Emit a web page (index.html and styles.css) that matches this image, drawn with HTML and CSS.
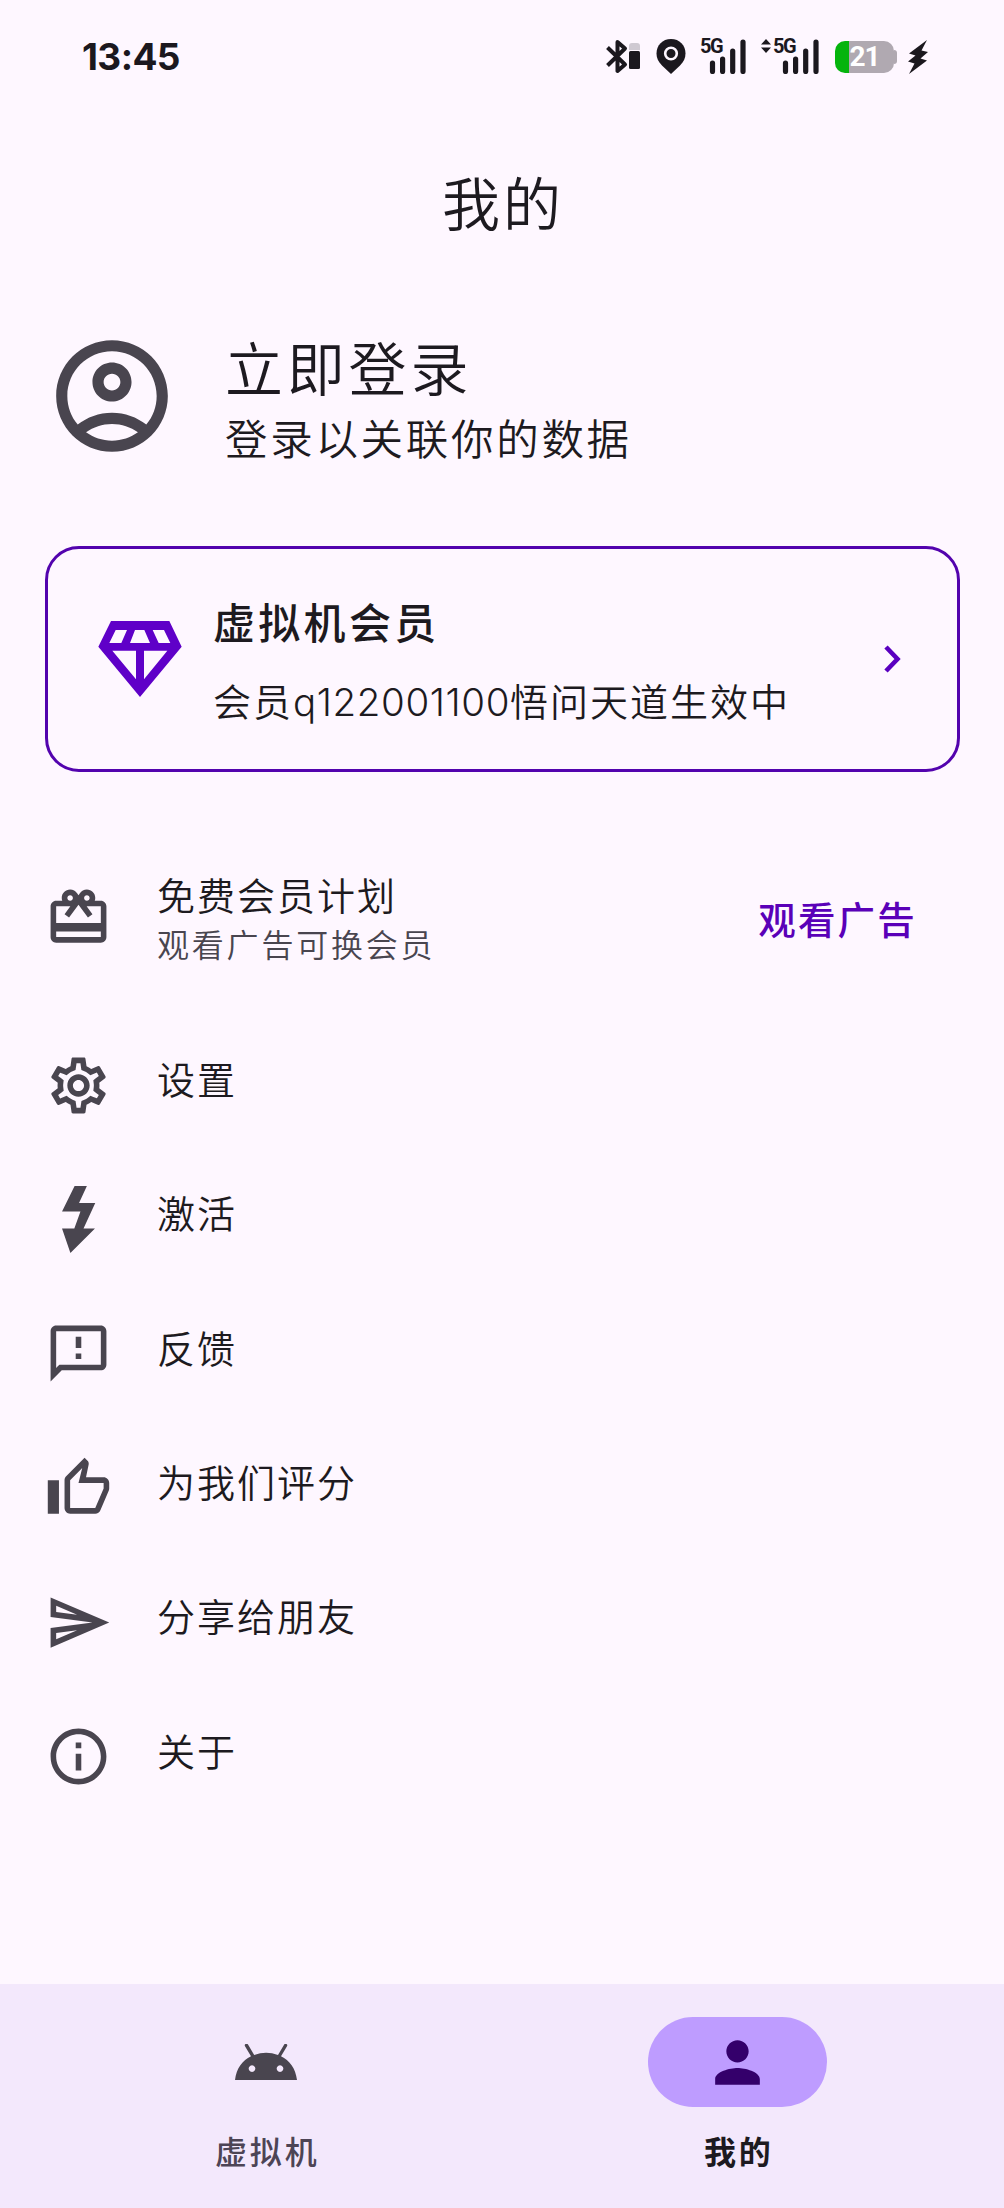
FILE: index.html
```html
<!DOCTYPE html>
<html lang="zh-CN">
<head>
<meta charset="utf-8">
<title>我的</title>
<link rel="stylesheet" href="styles.css">
</head>
<body>
<div class="screen">
  <header class="status">
    <span class="clock">13:45</span>
    <div class="tray">
      <svg class="i-bt" viewBox="0 0 36 36"><path d="M2.500 8.500 20 25.500 12.500 32V3L20 9.500 2.500 26.500" fill="none" stroke="#1b181e" stroke-width="4" stroke-linejoin="round"/><path d="M24 11V7q0-3 3-3h5q3 0 3 3v4z" fill="#cfc9d2"/><rect x="24" y="12" width="11" height="18" rx="1.500" fill="#1b181e"/></svg>
      <svg class="i-pin" viewBox="0 0 30 36"><path d="M15 0C6.500 0 .5 6.300 .5 14.500c0 5 2 8.500 5.500 12L15 35l9-8.500c3.500-3.500 5.500-7 5.500-12C29.500 6.300 23.500 0 15 0z" fill="#1b181e"/><circle cx="15" cy="14.500" r="5.800" fill="none" stroke="#fef7ff" stroke-width="2.600"/></svg>
      <div class="net">
        <span class="gen">5G</span>
        <svg class="i-bars" viewBox="0 0 37 35"><path d="M3.500 24v8.500M13.600 20v12.500M23.700 12v20.500M34 3v29.500" stroke="#1b181e" stroke-width="5.200" stroke-linecap="round"/></svg>
      </div>
      <div class="net net-b">
        <svg class="i-updown" viewBox="0 0 10 14"><path d="M0 5.500 5 0l5 5.500zM0 8.500h10L5 14z" fill="#1b181e"/></svg>
        <span class="gen">5G</span>
        <svg class="i-bars" viewBox="0 0 37 35"><path d="M3.500 24v8.500M13.600 20v12.500M23.700 12v20.500M34 3v29.500" stroke="#1b181e" stroke-width="5.200" stroke-linecap="round"/></svg>
      </div>
      <div class="battery"><span class="level">21</span></div>
      <svg class="i-charge" viewBox="0 0 20 34"><path d="M19 0 1 13.500l6.500 2L0 21.500l6.500 2L1 34 19 20.500l-6.500-2L20 12l-6.500-1.500z" fill="#1b181e"/></svg>
    </div>
  </header>

  <h1 class="title">我的</h1>

  <section class="profile">
    <svg class="avatar" viewBox="0 0 24 24"><path fill-rule="evenodd" d="M12 2C6.480 2 2 6.480 2 12s4.480 10 10 10 10-4.480 10-10S17.520 2 12 2zM7.350 18.500C8.660 17.560 10.260 17 12 17s3.340.56 4.650 1.500C15.340 19.440 13.740 20 12 20s-3.340-.56-4.650-1.500zm10.790-1.380C16.450 15.800 14.320 15 12 15s-4.450.8-6.140 2.120C4.700 15.730 4 13.950 4 12c0-4.420 3.580-8 8-8s8 3.580 8 8c0 1.950-.7 3.730-1.860 5.120zM12 6c-1.930 0-3.500 1.570-3.500 3.500S10.070 13 12 13s3.500-1.570 3.500-3.500S13.930 6 12 6zm0 5c-.83 0-1.500-.67-1.500-1.500S11.170 8 12 8s1.500.67 1.500 1.500S12.830 11 12 11z"/></svg>
    <div class="profile-text">
      <div class="login">立即登录</div>
      <div class="login-sub">登录以关联你的数据</div>
    </div>
  </section>

  <section class="card">
    <svg class="gem" viewBox="205 272 250 228"><path fill-rule="evenodd" d="M243 272H418L455 349 330 500 205 349zM257 299 238 338H274L291 299zM315 299 300 338H360L343 299zM368 299 386 338H421L402 299zM247 361 318 447V361zM342 361V447L412 361z"/></svg>
    <div class="card-text">
      <div class="card-title">虚拟机会员</div>
      <div class="card-sub">会员<span class="uid">q122001100</span>悟问天道生效中</div>
    </div>
    <svg class="chevron" viewBox="0 0 17 28"><path d="M2 2 13.500 14 2 26" fill="none" stroke="#5a00c0" stroke-width="4.600"/></svg>
  </section>

  <section class="offer">
    <svg class="icon" viewBox="0 0 24 24"><path d="M20 6h-2.180c.11-.31.18-.65.18-1 0-1.660-1.340-3-3-3-1.050 0-1.960.54-2.500 1.350l-.5.67-.5-.68C10.960 2.540 10.050 2 9 2 7.340 2 6 3.340 6 5c0 .35.07.69.18 1H4c-1.110 0-1.990.89-1.990 2L2 19c0 1.110.89 2 2 2h16c1.110 0 2-.89 2-2V8c0-1.110-.89-2-2-2zm-5-2c.55 0 1 .45 1 1s-.45 1-1 1-1-.45-1-1 .45-1 1-1zM9 4c.55 0 1 .45 1 1s-.45 1-1 1-1-.45-1-1 .45-1 1-1zm11 15H4v-2h16v2zm0-5H4V8h5.080L7 10.830 8.620 12 12 7.400 15.380 12 17 10.830 14.920 8H20v6z"/></svg>
    <div class="offer-text">
      <div class="label">免费会员计划</div>
      <div class="hint">观看广告可换会员</div>
    </div>
    <div class="action">观看广告</div>
  </section>

  <nav class="menu">
    <div class="row">
      <svg class="icon" viewBox="0 0 24 24"><path d="M19.430 12.980c.04-.32.07-.64.07-.98 0-.34-.03-.66-.07-.98l2.110-1.650c.19-.15.24-.42.12-.64l-2-3.460c-.09-.16-.26-.25-.44-.25-.06 0-.12.01-.17.03l-2.490 1c-.52-.4-1.080-.73-1.690-.98l-.38-2.650C14.460 2.180 14.250 2 14 2h-4c-.25 0-.46.18-.49.42l-.38 2.650c-.61.25-1.170.59-1.690.98l-2.490-1c-.06-.02-.12-.03-.18-.03-.17 0-.34.09-.43.25l-2 3.460c-.13.22-.07.49.12.64l2.110 1.650c-.04.32-.07.65-.07.98 0 .33.03.66.07.98l-2.110 1.650c-.19.15-.24.42-.12.64l2 3.460c.09.16.26.25.44.25.06 0 .12-.01.17-.03l2.490-1c.52.4 1.080.73 1.690.98l.38 2.650c.03.24.24.42.49.42h4c.25 0 .46-.18.49-.42l.38-2.650c.61-.25 1.170-.59 1.690-.98l2.490 1c.06.02.12.03.18.03.17 0 .34-.09.43-.25l2-3.460c.12-.22.07-.49-.12-.64l-2.110-1.650zm-1.980-1.710c.04.31.05.52.05.73 0 .21-.02.43-.05.73l-.14 1.130.89.7 1.080.84-.7 1.210-1.270-.51-1.040-.42-.9.68c-.43.32-.84.56-1.250.73l-1.060.43-.16 1.130-.2 1.350h-1.400l-.19-1.350-.16-1.130-1.060-.43c-.43-.18-.83-.41-1.230-.71l-.91-.7-1.060.43-1.270.51-.7-1.210 1.080-.84.89-.7-.14-1.130c-.03-.31-.05-.54-.05-.74s.02-.43.05-.73l.14-1.130-.89-.7-1.080-.84.7-1.210 1.270.51 1.040.42.9-.68c.43-.32.84-.56 1.250-.73l1.060-.43.16-1.130.2-1.350h1.390l.19 1.350.16 1.130 1.060.43c.43.18.83.41 1.230.71l.91.7 1.060-.43 1.270-.51.7 1.210-1.070.85-.89.7.14 1.130zM12 8c-2.210 0-4 1.790-4 4s1.790 4 4 4 4-1.790 4-4-1.790-4-4-4zm0 6c-1.100 0-2-.9-2-2s.9-2 2-2 2 .9 2 2-.9 2-2 2z"/></svg>
      <div class="label">设置</div>
    </div>
    <div class="row">
      <svg class="icon" viewBox="0 0 24 24"><path d="M10.600 0H15l-2.800 6.100H18l-4.200 9.100H17.900L9.100 24 6.100 15.200H10.500L12.700 9.100H6.100z"/></svg>
      <div class="label">激活</div>
    </div>
    <div class="row">
      <svg class="icon" viewBox="0 0 24 24"><path d="M20 2H4c-1.100 0-1.990.9-1.990 2L2 22l4-4h14c1.100 0 2-.9 2-2V4c0-1.100-.9-2-2-2zm0 14H5.170l-.59.59-.58.58V4h16v12zm-9-4h2v2h-2zm0-6h2v4h-2z"/></svg>
      <div class="label">反馈</div>
    </div>
    <div class="row">
      <svg class="icon" viewBox="0 0 24 24"><path d="M9 21h9c.83 0 1.540-.5 1.840-1.220l3.020-7.050c.09-.23.14-.47.14-.73v-2c0-1.100-.9-2-2-2h-6.310l.95-4.570.03-.32c0-.41-.17-.79-.44-1.060L14.170 1 7.580 7.590C7.220 7.950 7 8.450 7 9v10c0 1.100.9 2 2 2zM9 9l4.340-4.340L12 10h9v2l-3 7H9V9zM1 9h4v12H1z"/></svg>
      <div class="label">为我们评分</div>
    </div>
    <div class="row">
      <svg class="icon" viewBox="0 0 24 24"><path d="M4.010 6.030l7.510 3.220-7.520-1 .01-2.220m7.500 8.720L4 17.970v-2.220l7.510-1M2.010 3L2 10l15 2-15 2 .01 7L23 12 2.010 3z"/></svg>
      <div class="label">分享给朋友</div>
    </div>
    <div class="row">
      <svg class="icon" viewBox="0 0 24 24"><path d="M11 7h2v2h-2zm0 4h2v6h-2zm1-9C6.480 2 2 6.480 2 12s4.480 10 10 10 10-4.480 10-10S17.520 2 12 2zm0 18c-4.410 0-8-3.590-8-8s3.590-8 8-8 8 3.590 8 8-3.590 8-8 8z"/></svg>
      <div class="label">关于</div>
    </div>
  </nav>

  <nav class="tabs">
    <div class="tab">
      <div class="pill"><svg class="icon droid" viewBox="0 0 62 36"><path fill-rule="evenodd" d="M0 36C1.500 24 7.500 16.500 16 12.300L10 2.200A1.500 1.500 0 0 1 13 .6L19.200 11A34 34 0 0 1 43 11L49.200 .6A1.500 1.500 0 0 1 52 2.200L46 12.300C54.500 16.500 60.500 24 62 36zM17 21.300a3.300 3.300 0 1 0 .01 0zM45 21.300a3.300 3.300 0 1 0 .01 0z"/></svg></div>
      <div class="tab-label">虚拟机</div>
    </div>
    <div class="tab tab-on">
      <div class="pill"><svg class="icon" viewBox="0 0 24 24"><path d="M12 12c2.210 0 4-1.790 4-4s-1.790-4-4-4-4 1.790-4 4 1.790 4 4 4zm0 2c-2.670 0-8 1.340-8 4v2h16v-2c0-2.660-5.330-4-8-4z"/></svg></div>
      <div class="tab-label">我的</div>
    </div>
  </nav>
</div>
</body>
</html>
```
FILE: styles.css
```css
* { box-sizing: border-box; }
body { margin: 0; }
svg { display: block; flex: none; }
.screen {
  width: 1004px;
  height: 2208px;
  display: flex;
  flex-direction: column;
  background: #fef7ff;
  color: #1d1a20;
  font-family: "Noto Sans CJK SC", sans-serif;
  font-weight: 350;
  white-space: nowrap;
  overflow: hidden;
}

/* status bar */
.status {
  height: 114px;
  padding: 0 76px 0 82px;
  display: flex;
  align-items: center;
  justify-content: space-between;
}
.clock { font: 650 37px/44px Inter, sans-serif; color: #1b181e; letter-spacing: -0.6px; }
.tray { display: flex; align-items: center; height: 36px; }
.i-bt { width: 36px; height: 36px; }
.i-pin { width: 30px; height: 36px; margin-left: 15px; }
.net { display: flex; align-items: flex-start; height: 36px; margin-left: 14px; }
.net-b { margin-left: 15px; }
.gen {
  width: 22px;
  margin-right: -13px;
  font: 700 20px/15px Roboto, sans-serif;
  letter-spacing: -1.4px;
  color: #1b181e;
}
.i-bars { width: 37px; height: 35px; }
.i-updown { width: 10px; height: 14px; margin-right: 2px; }
.battery {
  width: 59px;
  height: 32px;
  margin-left: 16px;
  border-radius: 10px;
  background: linear-gradient(90deg, #05b40d 14px, #b0a9b1 14px);
  display: flex;
  align-items: center;
  justify-content: center;
  position: relative;
}
.battery::after {
  content: "";
  position: absolute;
  left: 59px;
  top: 9px;
  width: 3px;
  height: 14px;
  border-radius: 0 3px 3px 0;
  background: #b0a9b1;
}
.level { font: 700 28px/32px Roboto, sans-serif; letter-spacing: -1px; color: #fff; }
.i-charge { width: 20px; height: 34px; margin-left: 14px; }

.title {
  margin: 0;
  height: 180px;
  padding-left: 2px;
  font-size: 58px;
  font-weight: 350;
  letter-spacing: 3px;
  line-height: 174px;
  text-align: center;
}

/* account */
.profile {
  height: 134px;
  margin: 35px 45px 0;
  display: flex;
  align-items: center;
}
.avatar { width: 134px; height: 134px; fill: #49454f; }
.profile-text { margin-left: 46px; padding-top: 10px; }
.login { font-size: 58px; line-height: 70px; letter-spacing: 3.8px; }
.login-sub { font-size: 42.5px; line-height: 71px; letter-spacing: 2.7px; }

/* membership card */
.card {
  height: 226px;
  margin: 83px 44px 0 45px;
  padding: 0 56px 0 50px;
  border: 3px solid #5303ae;
  border-radius: 34px;
  display: flex;
  align-items: center;
}
.gem { width: 84px; height: 76px; fill: #5f00c8; }
.card-text { flex: 1; margin-left: 31px; padding-top: 4px; }
.card-title { font-size: 42px; font-weight: 500; line-height: 79px; letter-spacing: 3.3px; }
.card-sub { font-size: 38px; line-height: 79px; letter-spacing: 2px; }
.uid { font-family: Inter, sans-serif; font-size: 38.5px; letter-spacing: 0.6px; }
.chevron { width: 17px; height: 28px; }

/* list */
.icon { width: 67px; height: 67px; fill: #49454f; }
.offer {
  height: 134px;
  margin: 78px 87px 0 45px;
  display: flex;
  align-items: center;
}
.offer-text { flex: 1; margin-left: 45px; padding-top: 1px; }
.label { font-size: 38px; letter-spacing: 2px; line-height: 50px; }
.hint { font-size: 32px; letter-spacing: 2.8px; line-height: 48px; color: #49454f; }
.action { font-size: 37.5px; font-weight: 500; letter-spacing: 2.2px; color: #5a00b8; }
.menu { margin: 34px 45px 0; flex: 1; }
.row { height: 134.3px; display: flex; align-items: center; gap: 45px; }
.row .label { padding-bottom: 14px; }

/* bottom tabs */
.tabs {
  height: 224px;
  padding: 33px 31px 0 30px;
  background: #f3e8fc;
  display: flex;
}
.tab { flex: 1; display: flex; flex-direction: column; align-items: center; }
.pill {
  width: 179px;
  height: 90px;
  border-radius: 45px;
  display: flex;
  align-items: center;
  justify-content: center;
}
.tab-on .pill { background: #be9cff; }
.tab-on .icon { fill: #34006b; }
.icon.droid { width: 62px; height: 36px; }
.tab-label {
  margin-top: 18px;
  padding-left: 3px;
  font-size: 32px;
  font-weight: 500;
  line-height: 50px;
  letter-spacing: 2.8px;
  color: #4d4455;
}
.tab-on .tab-label { font-weight: 700; color: #1d1a20; }
```
